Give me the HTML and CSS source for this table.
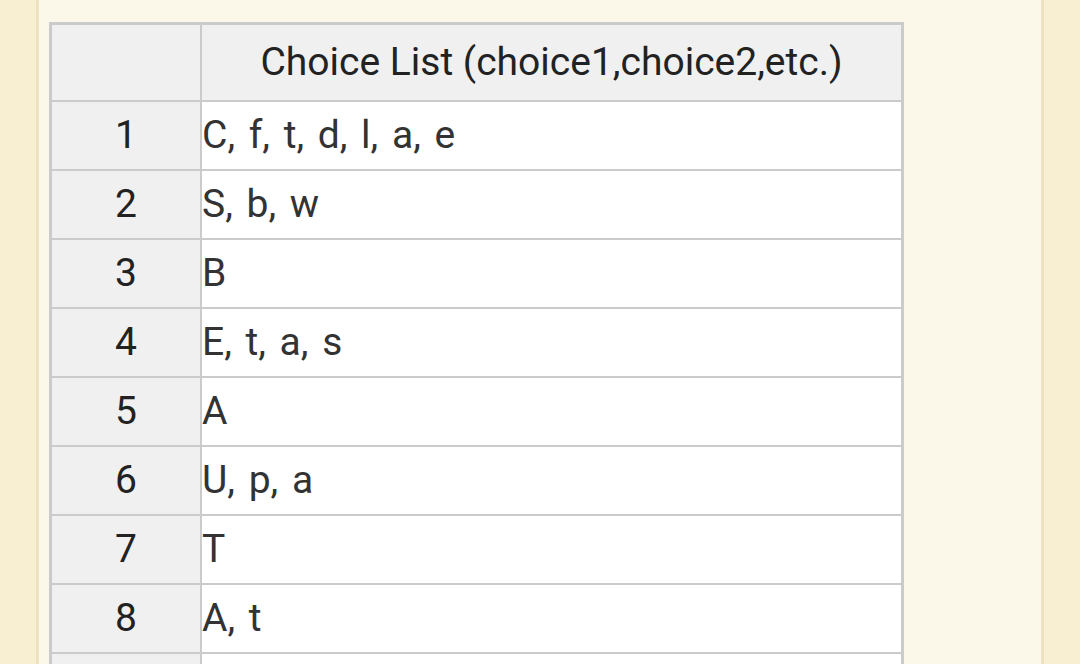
FILE: index.html
```html
<!DOCTYPE html>
<html>
<head>
<meta charset="utf-8">
<link rel="stylesheet" href="styles.css">
</head>
<body>
<div class="panel">
  <table class="choices">
    <thead>
      <tr><th class="idx"></th><th class="head">Choice List (choice1,choice2,etc.)</th></tr>
    </thead>
    <tbody>
      <tr><td class="idx">1</td><td class="val">C, f, t, d, l, a, e</td></tr>
      <tr><td class="idx">2</td><td class="val">S, b, w</td></tr>
      <tr><td class="idx">3</td><td class="val">B</td></tr>
      <tr><td class="idx">4</td><td class="val">E, t, a, s</td></tr>
      <tr><td class="idx">5</td><td class="val">A</td></tr>
      <tr><td class="idx">6</td><td class="val">U, p, a</td></tr>
      <tr><td class="idx">7</td><td class="val">T</td></tr>
      <tr><td class="idx">8</td><td class="val">A, t</td></tr>
      <tr><td class="idx"></td><td class="val"></td></tr>
    </tbody>
  </table>
</div>
</body>
</html>
```
FILE: styles.css
```css
html, body {
  margin: 0;
  padding: 0;
  height: 100%;
  overflow: hidden;
}
body {
  background: #f8eed2;
  font-family: Roboto, "Noto Sans", sans-serif;
  color: #333;
}
.panel {
  margin-left: 36px;
  width: 992px;
  height: 100%;
  border-left: 3px solid #efe2c2;
  border-right: 3px solid #efe2c2;
  background: #fcf8e9;
  padding: 22px 0 0 10px;
  box-sizing: content-box;
}
.choices {
  border-collapse: separate;
  border-spacing: 0;
  border: 3px solid #cbcbcb;
  font-size: 39px;
  line-height: 1;
}
.choices th, .choices td {
  padding: 0;
  border-right: 2px solid #cbcbcb;
  border-bottom: 2px solid #cbcbcb;
  vertical-align: middle;
}
.choices th:last-child, .choices td:last-child {
  border-right: none;
}
.choices th {
  height: 75px;
  background: #f0f0f0;
  font-weight: normal;
  color: #222;
}
.choices .idx {
  width: 148px;
  background: #f0f0f0;
  text-align: center;
  color: #222;
}
.choices .head {
  width: 699px;
  text-align: center;
}
.choices td {
  height: 67px;
}
.choices .val {
  background: #fff;
  text-align: left;
  color: #333;
  word-spacing: 4px;
}
```
